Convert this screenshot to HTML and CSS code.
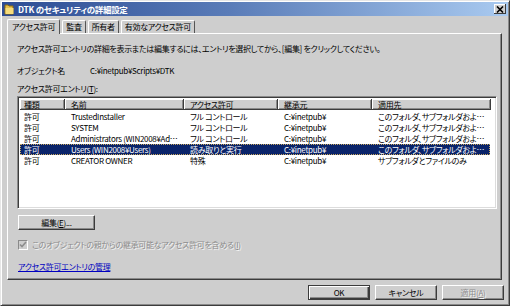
FILE: index.html
```html
<!DOCTYPE html>
<html lang="ja">
<head>
    <meta charset="UTF-8">
    <title>DTK のセキュリティの詳細設定</title>
    <link rel="stylesheet" href="styles.css">
</head>
<body>

<div class="window">
    <div class="titlebar">
        <svg class="folder" width="10" height="11" viewBox="0 0 10 11">
            <path d="M1 1h3l1 1h4v8H1z" fill="#e8c04a" stroke="#8a6a10" stroke-width="1"/>
            <path d="M1.5 4h8v6h-8z" fill="#f6dc7a"/>
        </svg>
        <span class="title">DTK のセキュリティの詳細設定</span>
        <div class="close">
            <svg width="8" height="7" viewBox="0 0 8 7"><path d="M1 0.5l6 6M7 0.5l-6 6" stroke="#000" stroke-width="1.6"/></svg>
        </div>
    </div>

    <div class="tabs">
        <div class="tab active">アクセス許可</div>
        <div class="tab">監査</div>
        <div class="tab">所有者</div>
        <div class="tab">有効なアクセス許可</div>
    </div>

    <div class="panel">
        <div class="intro">アクセス許可エントリの詳細を表示または編集するには、エントリを選択してから、[編集] をクリックしてください。</div>

        <div class="object">
            <span class="object-label">オブジェクト名</span>
            <span>C:¥inetpub¥Scripts¥DTK</span>
        </div>

        <div class="list-label">アクセス許可エントリ(<u>T</u>):</div>

        <div class="listview">
            <div class="lv-row lv-head">
                <div>種類</div>
                <div>名前</div>
                <div>アクセス許可</div>
                <div>継承元</div>
                <div>適用先</div>
            </div>
            <div class="lv-row">
                <div>許可</div>
                <div>TrustedInstaller</div>
                <div>フル コントロール</div>
                <div>C:¥inetpub¥</div>
                <div>このフォルダ、サブフォルダおよび…</div>
            </div>
            <div class="lv-row">
                <div>許可</div>
                <div>SYSTEM</div>
                <div>フル コントロール</div>
                <div>C:¥inetpub¥</div>
                <div>このフォルダ、サブフォルダおよび…</div>
            </div>
            <div class="lv-row">
                <div>許可</div>
                <div>Administrators (WIN2008¥Ad…</div>
                <div>フル コントロール</div>
                <div>C:¥inetpub¥</div>
                <div>このフォルダ、サブフォルダおよび…</div>
            </div>
            <div class="lv-row selected">
                <div>許可</div>
                <div>Users (WIN2008¥Users)</div>
                <div>読み取りと実行</div>
                <div>C:¥inetpub¥</div>
                <div>このフォルダ、サブフォルダおよび…</div>
            </div>
            <div class="lv-row">
                <div>許可</div>
                <div>CREATOR OWNER</div>
                <div>特殊</div>
                <div>C:¥inetpub¥</div>
                <div>サブフォルダとファイルのみ</div>
            </div>
        </div>

        <button class="btn edit-btn">編集(<u>E</u>)...</button>

        <div class="check-line">
            <span class="checkbox">
                <svg width="8" height="8" viewBox="0 0 8 8"><path d="M1 3.5l2 2 4-4.5" fill="none" stroke="#8d8d8d" stroke-width="1.6"/></svg>
            </span>
            <span class="disabled">このオブジェクトの親からの継承可能なアクセス許可を含める(<u>I</u>)</span>
        </div>

        <a class="manage-link" href="#">アクセス許可エントリの管理</a>
    </div>

    <div class="footer">
        <button class="btn default">OK</button>
        <button class="btn">キャンセル</button>
        <button class="btn disabled">適用(<u>A</u>)</button>
    </div>
</div>

</body>
</html>
```

FILE: styles.css
```css
body {
    margin: 0;
    font-family: "Noto Sans CJK JP", "Liberation Sans", sans-serif;
    font-size: 8px;
    letter-spacing: -0.3px;
    font-feature-settings: "palt";
    color: #000;
}

.window {
    width: 510px;
    height: 306px;
    box-sizing: border-box;
    background: #cecece;
    border: 1px solid;
    border-color: #e6e6e6 #3c3c3c #3c3c3c #e6e6e6;
    box-shadow: inset 1px 1px #fff, inset -1px -1px #8a8a8a;
    padding: 1px;
    display: flex;
    flex-direction: column;
}

.titlebar {
    height: 14px;
    display: flex;
    align-items: center;
    gap: 4px;
    padding: 0 2px 0 2px;
    background: linear-gradient(to right, #2c4c94, #5a7cb8 45%, #a9caf0);
    color: #fff;
    font-weight: bold;
    font-size: 8.5px;
}

.folder {
    flex: none;
}

.title {
    flex: 1;
    line-height: 14px;
}

.close {
    width: 12px;
    height: 10px;
    background: #cecece;
    box-shadow: inset -1px -1px #3c3c3c, inset 1px 1px #fff;
    display: flex;
    align-items: center;
    justify-content: center;
}

.tabs {
    display: flex;
    align-items: flex-end;
    margin: 3px 0 0 5px;
    height: 14px;
    position: relative;
    z-index: 1;
}

.tab {
    height: 12px;
    line-height: 12px;
    padding: 0 3px;
    margin-right: 2px;
    border-top: 1px solid #fff;
    border-left: 1px solid #fff;
    border-right: 1px solid #555;
    border-radius: 2px 2px 0 0;
    background: #cecece;
}

.tab.active {
    height: 14px;
    line-height: 14px;
    margin-bottom: -1px;
    padding: 0 4px;
}

.panel {
    margin: 0 6px 0 5px;
    height: 247px;
    box-sizing: border-box;
    border: 1px solid;
    border-color: #fff #3c3c3c #3c3c3c #fff;
    box-shadow: inset -1px -1px #8a8a8a;
    padding: 9px 4px 0 9px;
    display: flex;
    flex-direction: column;
    align-items: flex-start;
}

.intro,
.object,
.list-label,
.check-line,
.manage-link {
    line-height: 12px;
    white-space: nowrap;
}

.object {
    margin-top: 10px;
    display: flex;
}

.object-label {
    width: 73px;
}

.list-label {
    margin-top: 6px;
}

.listview {
    margin-top: 1px;
    width: 480px;
    height: 113px;
    box-sizing: border-box;
    background: #fff;
    border: 1px solid;
    border-color: #8a8a8a #fff #fff #8a8a8a;
    box-shadow: inset 1px 1px #3c3c3c, inset -1px -1px #dcdcdc;
    padding: 2px 6px 0 2px;
}

.lv-row {
    display: grid;
    grid-template-columns: 45px 119px 94px 94px 119px;
    height: 11px;
    line-height: 11px;
    white-space: nowrap;
}

.lv-row div {
    padding-left: 6px;
    overflow: hidden;
    text-overflow: ellipsis;
}

.lv-row div:first-child {
    padding-left: 4px;
}

.lv-head {
    margin-bottom: 1px;
    background: #cecece;
}

.lv-head div {
    box-shadow: inset -1px -1px #3c3c3c, inset 1px 1px #fff, inset -2px -2px #8a8a8a;
}

.lv-row.selected {
    background: #0a246a;
    color: #fff;
    outline: 1px dotted #c8a860;
    outline-offset: -1px;
}

.btn {
    font-family: inherit;
    font-size: 8px;
    letter-spacing: -0.3px;
    font-feature-settings: "palt";
    height: 15px;
    line-height: 11px;
    padding: 0;
    background: #cecece;
    color: #000;
    border: 1px solid;
    border-color: #fff #3c3c3c #3c3c3c #fff;
    box-shadow: inset -1px -1px #8a8a8a;
}

.edit-btn {
    margin: 6px 0 0 1px;
    width: 77px;
}

.check-line {
    margin: 9px 0 0 1px;
    display: flex;
    align-items: center;
    gap: 4px;
}

.checkbox {
    width: 8px;
    height: 8px;
    background: #cecece;
    border: 1px solid;
    border-color: #8a8a8a #fff #fff #8a8a8a;
    display: flex;
}

.disabled {
    color: #8d8d8d;
    text-shadow: 1px 1px #f4f4f4;
}

.manage-link {
    margin: 10px 0 0 1px;
    color: #0000c0;
    text-decoration: underline;
}

.footer {
    display: flex;
    justify-content: flex-end;
    gap: 5px;
    margin: 5px 4px 0 0;
}

.footer .btn {
    width: 62px;
}

.btn.default {
    border-color: #3c3c3c;
    box-shadow: inset 1px 1px #fff, inset -1px -1px #3c3c3c, inset -2px -2px #8a8a8a;
}
```
